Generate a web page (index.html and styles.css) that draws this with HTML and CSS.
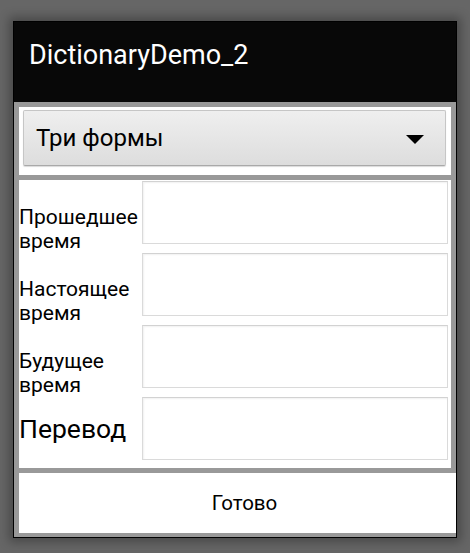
FILE: index.html
```html
<!DOCTYPE html>
<html>
<head>
<meta charset="utf-8">
<link rel="stylesheet" href="styles.css">
</head>
<body>
<div class="window">
  <div class="titlebar">DictionaryDemo_2</div>
  <div class="content">
    <div class="panel spinner-panel">
      <div class="spinner">
        <span class="spinner-text">Три формы</span>
        <svg class="arrow" width="18" height="9" viewBox="0 0 18 9"><polygon points="0,0 18,0 9,9" fill="#000"/></svg>
      </div>
    </div>
    <div class="panel form-panel">
      <div class="row"><div class="label two">Прошедшее время</div><div class="field"></div></div>
      <div class="row"><div class="label two">Настоящее время</div><div class="field"></div></div>
      <div class="row"><div class="label two">Будущее время</div><div class="field"></div></div>
      <div class="row"><div class="label big">Перевод</div><div class="field"></div></div>
    </div>
    <div class="button-panel">Готово</div>
  </div>
</div>
</body>
</html>
```
FILE: styles.css
```css
html, body {
  margin: 0;
  padding: 0;
  background: #666666;
  height: 100%;
}
body {
  padding-top: 21px;
  padding-left: 13px;
  font-family: Roboto, "Noto Sans", sans-serif;
  box-sizing: border-box;
}
.window {
  width: 444px;
  height: 517px;
  box-sizing: border-box;
  border: 1px solid #000;
  background: #999999;
  box-shadow: 0 0 10px 4px rgba(0,0,0,0.3);
  display: flex;
  flex-direction: column;
}
.titlebar {
  height: 80px;
  background: #080808;
  color: #fff;
  font-size: 27px;
  line-height: 30px;
  padding: 18px 0 0 15px;
  box-sizing: border-box;
}
.content {
  display: flex;
  flex-direction: column;
  padding-top: 5px;
  gap: 5px;
}
.panel {
  background: #fff;
  margin: 0 5px;
}
.spinner-panel {
  height: 68px;
  box-sizing: border-box;
  padding: 3px 5px 9px 4px;
}
.spinner {
  height: 56px;
  box-sizing: border-box;
  border: 1px solid #c6c6c6;
  border-bottom-color: #a9a9a9;
  border-radius: 2px;
  background: linear-gradient(#efefef, #dddddd);
  box-shadow: 0 1px 1px rgba(0,0,0,0.15);
  display: flex;
  align-items: center;
  justify-content: space-between;
  padding: 0 21px 0 12px;
}
.spinner-text {
  font-size: 24px;
  color: #000;
}
.arrow {
  display: block;
  margin-top: 2px;
}
.form-panel {
  height: 288px;
  box-sizing: border-box;
  padding: 1px 3px 8px 0;
  display: flex;
  flex-direction: column;
  gap: 9px;
}
.row {
  height: 63px;
  display: flex;
  align-items: center;
}
.label {
  width: 123px;
  flex: none;
  font-size: 21px;
  line-height: 24px;
  color: #000;
}
.label.two {
  padding-top: 32px;
}
.label.big {
  font-size: 26.5px;
}
.field {
  flex: 1;
  align-self: stretch;
  background: #fff;
  border: 1px solid #dadada;
  border-top-color: #d2d2d2;
  box-shadow: inset 1px 1px 2px rgba(0,0,0,0.06);
}
.button-panel {
  background: #fff;
  margin-left: 5px;
  height: 60px;
  display: flex;
  align-items: center;
  justify-content: center;
  padding-left: 14px;
  font-size: 20.5px;
  color: #000;
}
```
